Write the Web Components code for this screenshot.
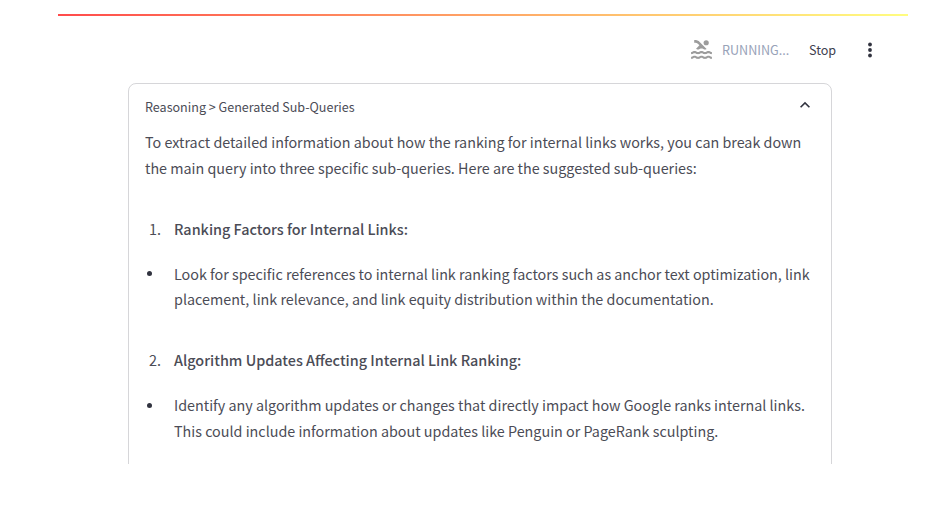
<!DOCTYPE html>
<html><head><meta charset="utf-8"><style>
html,body{margin:0;padding:0;background:#fff;height:515px;overflow:hidden}
body{font-family:"Noto Sans CJK SC","Noto Sans",sans-serif;color:rgb(49,51,63)}
</style></head><body>
<app-shell>
<top-decoration slot="deco"></top-decoration>
<status-bar slot="status"></status-bar>
<reasoning-expander label="Reasoning > Generated Sub-Queries">
<p-text>To extract detailed information about how the ranking for internal links works, you can break down the main query into three specific sub-queries. Here are the suggested sub-queries:</p-text>
<step-head n="1.">Ranking Factors for Internal Links:</step-head>
<bullet-item>Look for specific references to internal link ranking factors such as anchor text optimization, link placement, link relevance, and link equity distribution within the documentation.</bullet-item>
<step-head n="2.">Algorithm Updates Affecting Internal Link Ranking:</step-head>
<bullet-item>Identify any algorithm updates or changes that directly impact how Google ranks internal links. This could include information about updates like Penguin or PageRank sculpting.</bullet-item>
</reasoning-expander>
</app-shell>
<script>
const def=(name,html)=>customElements.define(name,class extends HTMLElement{constructor(){super();const s=this.attachShadow({mode:"open"});s.innerHTML=html;}});
const TXT="#4b4c56";
def("app-shell",`<style>:host{display:flex;flex-direction:column;height:464px;overflow:hidden;padding:14px 42px 0 58px;box-sizing:border-box;width:950px}
.main{display:flex;flex-direction:column;padding:0 76px 0 70px;min-height:0}</style>
<slot name="deco"></slot><div class="main"><slot name="status"></slot><slot></slot></div>`);
def("top-decoration",`<style>:host{display:block;height:2px;flex:none;background:linear-gradient(90deg,rgb(255,75,75),rgb(255,253,128))}</style>`);
def("status-bar",`<style>:host{display:flex;align-items:center;height:67px;flex:none;justify-content:flex-end;font-size:12.6px;margin-right:-54px}
svg{display:block}
.sw{width:25px;height:25px;color:#9c9c9c;margin-right:8.5px;margin-left:-.5px}
.r{color:#98a2b8;width:87px}
.s{color:#3f4150;width:49px}
.m{width:24px;height:24px;color:rgb(49,51,63);margin-right:4px}</style>
<svg class="sw" viewBox="0 0 24 24" fill="currentColor"><path d="M22 21c-1.11 0-1.73-.37-2.18-.64-.37-.22-.6-.36-1.15-.36-.56 0-.78.13-1.15.36-.46.27-1.07.64-2.18.64s-1.73-.37-2.18-.64c-.37-.22-.6-.36-1.15-.36-.56 0-.78.13-1.15.36-.46.27-1.08.64-2.19.64-1.11 0-1.73-.37-2.18-.64-.37-.23-.6-.36-1.15-.36s-.78.13-1.15.36c-.46.27-1.08.64-2.19.64v-2c.56 0 .78-.13 1.15-.36.46-.27 1.08-.64 2.19-.64s1.73.37 2.18.64c.37.23.59.36 1.15.36.56 0 .78-.13 1.15-.36.46-.27 1.08-.64 2.19-.64 1.11 0 1.73.37 2.18.64.37.22.6.36 1.15.36s.78-.13 1.15-.36c.45-.27 1.07-.64 2.18-.64s1.73.37 2.18.64c.37.23.59.36 1.15.36v2zm0-4.5c-1.11 0-1.73-.37-2.18-.64-.37-.22-.6-.36-1.15-.36-.56 0-.78.13-1.15.36-.45.27-1.07.64-2.18.64s-1.73-.37-2.18-.64c-.37-.22-.6-.36-1.15-.36-.56 0-.78.13-1.15.36-.45.27-1.07.64-2.18.64s-1.73-.37-2.18-.64c-.37-.22-.6-.36-1.15-.36s-.78.13-1.15.36c-.47.27-1.09.64-2.2.64v-2c.56 0 .78-.13 1.15-.36.45-.27 1.07-.64 2.18-.64s1.73.37 2.18.64c.37.22.6.36 1.15.36.56 0 .78-.13 1.15-.36.45-.27 1.07-.64 2.18-.64s1.73.37 2.18.64c.37.22.6.36 1.15.36s.78-.13 1.15-.36c.45-.27 1.07-.64 2.18-.64s1.73.37 2.18.64c.37.22.6.36 1.15.36v2zM8.67 12c.56 0 .78-.13 1.15-.36.46-.27 1.08-.64 2.19-.64 1.11 0 1.73.37 2.18.64.37.22.6.36 1.15.36s.78-.13 1.15-.36c.12-.07.26-.15.41-.23L10.48 5C8.93 3.45 7.5 2.99 5 3v2.5c1.82-.01 2.89.39 4 1.5l1 1-3.25 3.25c.31.12.56.27.77.39.37.23.59.36 1.15.36z"/><circle cx="16.5" cy="5.5" r="2.5"/></svg>
<span class="r">RUNNING...</span><span class="s">Stop</span>
<svg class="m" viewBox="0 0 24 24" fill="currentColor"><circle cx="12" cy="6.5" r="1.9"/><circle cx="12" cy="12" r="1.9"/><circle cx="12" cy="17.5" r="1.9"/></svg>`);
customElements.define("reasoning-expander",class extends HTMLElement{constructor(){super();const s=this.attachShadow({mode:"open"});s.innerHTML=`<style>:host{display:block;flex:none;border:1px solid rgba(49,51,63,.2);border-radius:8px;padding:0 16px;width:704px;box-sizing:border-box}
.h{display:flex;align-items:center;justify-content:space-between;height:46px;font-size:12.55px;color:${TXT}}
.l{padding-bottom:2px}
svg{display:block;width:20px;height:20px;margin-right:0;color:rgb(49,51,63);margin-top:-4px}
.b{display:block;margin-top:-1px}</style>
<div class="h"><span class="l"></span><svg viewBox="0 0 24 24" fill="currentColor"><path d="M12 8l-6 6 1.41 1.41L12 10.83l4.59 4.58L18 14z"/></svg></div><div class="b"><slot></slot></div>`;s.querySelector(".l").textContent=this.getAttribute("label");}});
def("p-text",`<style>:host{display:block;font-size:14.33px;line-height:25.6px;color:${TXT};padding-top:.4px;margin-bottom:35px}</style><slot></slot>`);
customElements.define("step-head",class extends HTMLElement{constructor(){super();const s=this.attachShadow({mode:"open"});s.innerHTML=`<style>:host{display:flex;font-size:14.4px;line-height:25.6px;font-weight:500;margin:0 0 19.4px;color:${TXT}}
.n{width:29px;text-align:right;padding-right:13px;box-sizing:border-box;font-weight:400;flex:none}</style><span class="n"></span><span><slot></slot></span>`;s.querySelector(".n").textContent=this.getAttribute("n");}});
def("bullet-item",`<style>:host{display:flex;font-size:14.33px;line-height:25.6px;color:${TXT};margin-bottom:35.4px}
.d{width:29px;flex:none;display:flex;padding:10.5px 0 0 2px;box-sizing:border-box}
.d i{display:block;width:5px;height:5px;border-radius:50%;background:rgb(49,51,63)}</style><span class="d"><i></i></span><span><slot></slot></span>`);
</script>
</body></html>
